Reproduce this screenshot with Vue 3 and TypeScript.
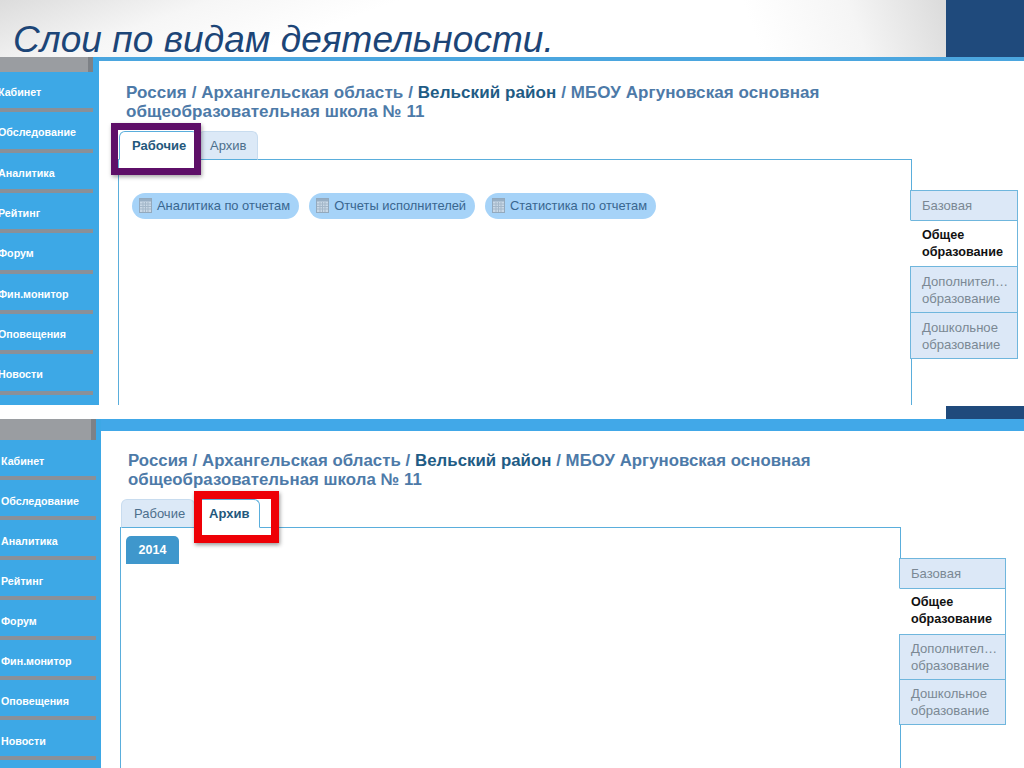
<script setup lang="ts">
interface Panel {
  key: string
  active: string
  year: boolean
}
const panels: Panel[] = [
  { key: 'one', active: 'Рабочие', year: false },
  { key: 'two', active: 'Архив', year: true },
]
const menu = ['Кабинет', 'Обследование', 'Аналитика', 'Рейтинг', 'Форум', 'Фин.монитор', 'Оповещения', 'Новости']
const tabs = ['Рабочие', 'Архив']
const pills = ['Аналитика по отчетам', 'Отчеты исполнителей', 'Статистика по отчетам']
const sideTabs = [
  { lines: ['Базовая'], active: false },
  { lines: ['Общее', 'образование'], active: true },
  { lines: ['Дополнител…', 'образование'], active: false },
  { lines: ['Дошкольное', 'образование'], active: false },
]
</script>

<template>
  <div class="slide">
    <header class="head">
      <h1 class="title">Слои по видам деятельности.</h1>
      <div class="corner"></div>
    </header>

    <template v-for="p in panels" :key="p.key">
      <div v-if="p.year" class="strip"><div class="corner"></div></div>
      <section class="panel" :class="p.key">
        <nav class="side">
          <div class="side-top"><span class="side-notch"></span></div>
          <a v-for="m in menu" :key="m" class="item"><span>{{ m }}</span></a>
        </nav>
        <div class="main">
          <div class="crumbs">
            Россия / Архангельская область / <b>Вельский район</b> / МБОУ Аргуновская основная общеобразовательная школа № 11
          </div>
          <div class="tabs">
            <div v-for="t in tabs" :key="t" class="tab" :class="{ on: t === p.active }">{{ t }}</div>
          </div>
          <div class="body">
            <div class="box">
              <div v-if="p.year" class="year">2014</div>
              <div v-else class="pills">
                <div v-for="l in pills" :key="l" class="pill">
                  <svg width="13" height="15" viewBox="0 0 13 15">
                    <rect x="0.5" y="0.5" width="12" height="14" fill="#c9d8e6" stroke="#93a9bd" />
                    <rect x="1" y="1" width="11" height="2.5" fill="#97aec3" />
                    <path d="M1 6h11M1 8.500h11M1 11h11M4 4v10M6.500 4v10M9 4v10" stroke="#a3b7c9" stroke-width="1" fill="none" />
                  </svg>
                  <span>{{ l }}</span>
                </div>
              </div>
            </div>
            <div class="vtabs">
              <div v-for="s in sideTabs" :key="s.lines[0]" class="vtab" :class="{ on: s.active }">
                <div v-for="l in s.lines" :key="l">{{ l }}</div>
              </div>
            </div>
          </div>
        </div>
        <div class="mark"></div>
      </section>
    </template>
  </div>
</template>

<style>
html, body { margin: 0; padding: 0; background: #fff; }
</style>

<style scoped>
.slide {
  width: 1024px;
  height: 768px;
  overflow: hidden;
  position: relative;
  display: flex;
  flex-direction: column;
  font-family: "Liberation Sans", Arial, sans-serif;
  background: #fff;
}
.head {
  height: 57px;
  flex: none;
  display: flex;
  justify-content: space-between;
  background:
    linear-gradient(160deg, #dcdcdc 0, #f6f6f6 18%, rgba(255, 255, 255, 0) 34%),
    linear-gradient(250deg, #dcdcdc 8%, #f5f5f5 17%, #ffffff 27%);
}
.title {
  margin: 0;
  padding: 21px 0 0 13px;
  font-size: 37px;
  line-height: 37px;
  height: 36px;
  font-weight: 400;
  font-style: italic;
  letter-spacing: 0.06px;
  color: #1c4577;
  white-space: nowrap;
}
.corner { width: 78px; background: #1f4a7c; flex: none; }
.strip { height: 14px; flex: none; display: flex; justify-content: flex-end; padding-top: 1px; box-sizing: border-box; }

.panel { position: relative; display: flex; flex: none; }
.panel.one { height: 348px; }
.panel.two { height: 349px; }

.side { flex: none; background: #3da8e6; display: flex; flex-direction: column; }
.one .side { width: 99px; }
.two .side { width: 101px; }
.side-top { flex: none; background: #9a9da1; display: flex; justify-content: flex-end; }
.one .side-top { height: 15px; width: 93px; }
.two .side-top { height: 21px; width: 96px; }
.side-notch { width: 5px; background: #7d8186; }
.item {
  flex: none;
  box-sizing: border-box;
  display: flex;
  align-items: center;
  border-bottom: 4px solid #8a9098;
  color: #fff;
  font-size: 10.700px;
  font-weight: 700;
  white-space: nowrap;
}
.one .item { width: 93px; height: 40.33px; padding: 4px 0 0 0; }
.one .item span { margin-left: -2px; }
.two .item { width: 96px; height: 40px; padding: 6px 0 0 1px; }

.main { flex: 1; min-width: 0; background: #fff; display: flex; flex-direction: column; box-sizing: border-box; }
.one .main { border-top: 4px solid #4ba6df; padding: 22px 0 0 19px; }
.two .main { border-top: 12px solid #41a8e8; padding: 20px 0 0 19px; }

.crumbs {
  font-weight: 700;
  color: #4d7aa8;
  line-height: 19px;
  padding-left: 8px;
}
.crumbs b { color: #1f5c85; }
.one .crumbs { font-size: 17px; letter-spacing: 0.08px; width: 720px; }
.two .crumbs { font-size: 16.800px; letter-spacing: 0.05px; width: 710px; }

.tabs { display: flex; flex: none; position: relative; z-index: 1; margin: 10px 0 -1px; padding-left: 1px; }
.tab {
  box-sizing: border-box;
  height: 29px;
  border: 1px solid #c8dcef;
  border-bottom: 1px solid #5aaedc;
  border-radius: 6px 6px 0 0;
  background: #dce9f7;
  color: #4d6f8c;
  font-size: 13px;
  line-height: 27px;
  padding: 0 0 0 11px;
}
.tab.on {
  background: #fff;
  border-color: #5aaedc;
  border-bottom-color: #fff;
  color: #24587c;
  font-weight: 700;
}
.one .tab:first-child { width: 79px; padding-left: 12px; }
.one .tab:last-child { width: 60px; }
.two .tab:first-child { width: 74px; padding-left: 12px; }
.two .tab:last-child { width: 65px; padding-left: 13px; }

.body { flex: 1; display: flex; min-height: 0; }
.box {
  box-sizing: border-box;
  border: 1px solid #5aaedc;
  border-bottom: 0;
  flex: none;
}
.one .box { width: 794px; }
.two .box { width: 781px; }

.pills { display: flex; gap: 10px; padding: 33px 0 0 13px; }
.pill {
  display: flex;
  align-items: center;
  gap: 5px;
  height: 26px;
  box-sizing: border-box;
  padding: 0 9px 1px 7px;
  border-radius: 13px;
  background: #a6d3f8;
  color: #39668f;
  font-size: 12.900px;
  white-space: nowrap;
}
.year {
  width: 53px;
  height: 28px;
  margin: 8px 0 0 5px;
  background: #3f97cc;
  border-radius: 5px 5px 0 0;
  color: #fff;
  font-size: 12.500px;
  font-weight: 700;
  line-height: 28px;
  text-align: center;
}

.vtabs { flex: none; display: flex; flex-direction: column; margin-left: -2px; padding-top: 31px; position: relative; }
.one .vtabs { width: 108px; }
.two .vtabs { width: 107px; }
.vtab {
  box-sizing: border-box;
  border: 1px solid #6fb6dd;
  background: #dce8f7;
  color: #7b8894;
  font-size: 13.100px;
  line-height: 17px;
  padding: 6px 2px 5px 11px;
  white-space: nowrap;
}
.vtab:first-child { height: 31px; }
.vtab + .vtab { margin-top: -1px; }
.vtab.on {
  background: #fff;
  border-left-color: #fff;
  color: #111;
  font-size: 12.600px;
  font-weight: 700;
  height: 47px;
}
.vtab:not(:first-child):not(.on) { height: 47px; }
.two .vtab:not(:first-child) { padding-top: 5px; }
.two .vtab:not(:first-child):not(.on) { height: 46px; }

.mark { position: absolute; box-sizing: border-box; pointer-events: none; z-index: 2; }
.one .mark {
  left: 111px;
  top: 66px;
  width: 90px;
  height: 52px;
  border: 7px solid #5e0f68;
  box-shadow: 1px 2px 4px rgba(0, 0, 0, 0.35);
}
.two .mark {
  left: 194px;
  top: 72px;
  width: 85px;
  height: 52px;
  border: 8px solid #ee0006;
  box-shadow: 1px 2px 4px rgba(0, 0, 0, 0.4);
}
</style>
